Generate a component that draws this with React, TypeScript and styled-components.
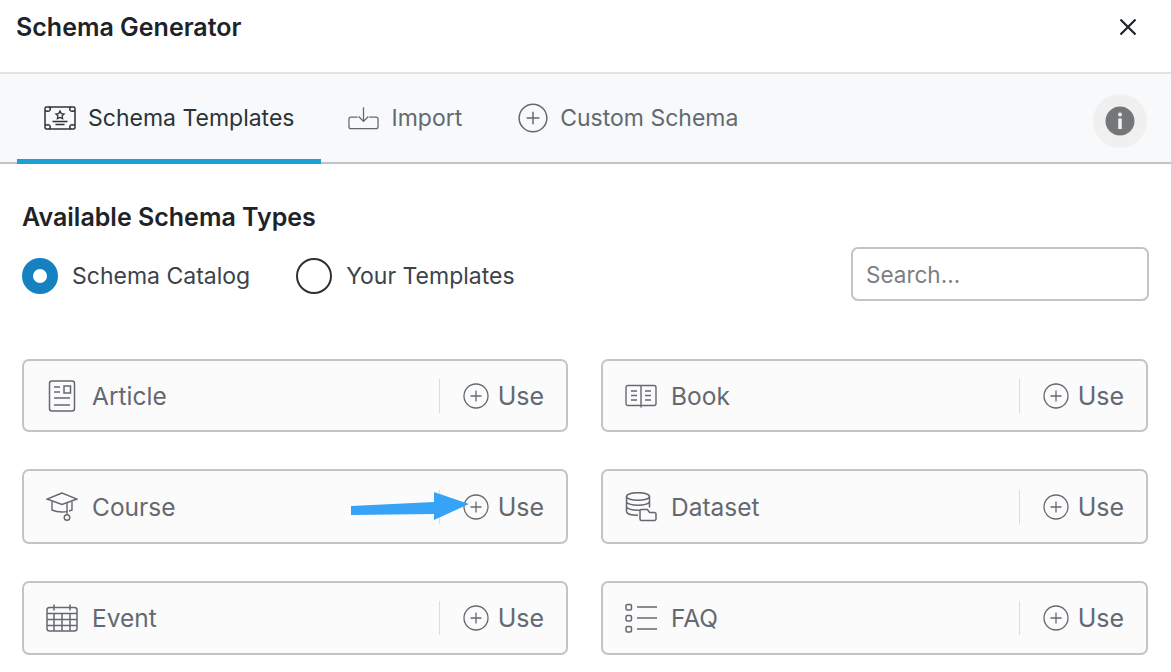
import React from "react";
import styled, { createGlobalStyle } from "styled-components";

const GlobalStyle = createGlobalStyle`
  html, body {
    margin: 0;
    padding: 0;
    background: #fff;
  }
  body {
    font-family: Inter, "Liberation Sans", sans-serif;
    color: #1d2327;
  }
`;

const CertificateIcon = () => (
  <svg width="32" height="24" viewBox="0 0 32 24" fill="none" stroke="#2c3338" strokeWidth="1.5">
    <rect x="1" y="1" width="30" height="22" rx="1.5" />
    <path d="M1 5h2a2 2 0 0 0 2-4M31 5h-2a2 2 0 0 1-2-4M1 19h2a2 2 0 0 1 2 4M31 19h-2a2 2 0 0 0-2 4" />
    <path d="M16 5l1.3 2.6 2.8.3-2 2 .5 2.8-2.6-1.3-2.6 1.3.5-2.8-2-2 2.8-.3z" strokeWidth="1.3" />
    <path d="M8.5 15.5h15M11.5 18.5h9" strokeWidth="1.3" />
  </svg>
);

const ImportIcon = () => (
  <svg width="31" height="24" viewBox="0 0 32 24" fill="none" stroke="#646970" strokeWidth="1.3">
    <path d="M16 1v14M11 10.5l5 5 5-5" />
    <path d="M10 11H3a2 2 0 0 0-2 2v8a2 2 0 0 0 2 2h26a2 2 0 0 0 2-2v-8a2 2 0 0 0-2-2h-7" />
  </svg>
);

const PlusCircle = ({ size }: { size: number }) => (
  <svg width={size} height={size} viewBox="0 0 26 26" fill="none" stroke="#646970" strokeWidth="1.3">
    <circle cx="13" cy="13" r="12" />
    <path d="M13 7.5v11M7.5 13h11" />
  </svg>
);

const ArticleIcon = () => (
  <svg width="30" height="32" viewBox="0 0 30 32" fill="none" stroke="#646970" strokeWidth="1.5">
    <rect x="2.5" y="1" width="25" height="30" rx="2.5" />
    <path d="M7 7h6M7 12h6M7 18h16M7 25h16" />
    <rect x="17" y="6" width="6.5" height="7" />
  </svg>
);

const BookIcon = () => (
  <svg width="32" height="24" viewBox="0 0 32 24" fill="none" stroke="#646970" strokeWidth="1.4">
    <rect x="1" y="1.5" width="30" height="20" rx="2" />
    <path d="M16 1.5V23.5M6 7h6M6 11.5h6M6 16h6M20 7h6M20 11.5h6M20 16h6" />
  </svg>
);

const CapIcon = () => (
  <svg width="32" height="30" viewBox="0 0 32 30" fill="none" stroke="#646970" strokeWidth="1.4">
    <path d="M16 1L1 7l15 5.5L31 7z" />
    <path d="M6 9.5V18c3 1.5 6.5 2 10 2 1.5 0 3.5 0 5.5-.6M26 9.5V18c-1 .5-2 .8-3 1" />
    <path d="M21 10.5v12" />
    <circle cx="21" cy="25.5" r="2.8" />
  </svg>
);

const DatasetIcon = () => (
  <svg width="32" height="30" viewBox="0 0 32 30" fill="none" stroke="#646970" strokeWidth="1.5">
    <ellipse cx="13" cy="4.5" rx="11.5" ry="3.8" />
    <path d="M1.5 4.5v15c0 2 4 3.8 11.5 3.8M24.5 4.5v11M1.5 9.5c0 2 5 3.8 11.5 3.8s11.5-1.8 11.5-3.8M1.5 14.5c0 2 5 3.8 11.5 3.8 1.2 0 2-.1 3-.2" />
    <path d="M15 27v-8a1.5 1.5 0 0 1 1.5-1.5h6l2 3h5a1.5 1.5 0 0 1 1.5 1.5v5a1.5 1.5 0 0 1-1.5 1.5h-13A1.5 1.5 0 0 1 15 27z" fill="#fbfbfc" />
  </svg>
);

const CalendarIcon = () => (
  <svg width="32" height="28" viewBox="0 0 32 28" fill="none" stroke="#646970" strokeWidth="1.5">
    <rect x="1" y="3.5" width="30" height="23.5" rx="2.5" />
    <path d="M8 0.5v6M24 0.5v6M1 9.5h30M1 15.5h30M1 21.5h30M8 9.5V27M16 9.5V27M24 9.5V27" />
  </svg>
);

const FaqIcon = () => (
  <svg width="32" height="30" viewBox="0 0 32 30" fill="none" stroke="#646970" strokeWidth="1.5">
    <rect x="1" y="1.5" width="5.5" height="5.5" rx="1.5" />
    <rect x="1" y="12.5" width="5.5" height="5.5" rx="1.5" />
    <rect x="1" y="23.5" width="5.5" height="5.5" rx="1.5" />
    <path d="M12 4h20M12 15h20M12 26h20" />
  </svg>
);

const schemas = [
  { name: "Article", icon: <ArticleIcon /> },
  { name: "Book", icon: <BookIcon /> },
  { name: "Course", icon: <CapIcon />, marked: true },
  { name: "Dataset", icon: <DatasetIcon /> },
  { name: "Event", icon: <CalendarIcon /> },
  { name: "FAQ", icon: <FaqIcon /> },
];

const App = () => (
  <Page>
    <GlobalStyle />
    <Header>
      <Title>Schema Generator</Title>
      <CloseButton aria-label="Close">
        <svg width="18" height="18" viewBox="0 0 18 18" stroke="#1d2327" strokeWidth="2.2" fill="none">
          <path d="M1.5 1.5l15 15M16.5 1.5l-15 15" />
        </svg>
      </CloseButton>
    </Header>
    <TabBar>
      <Tab $active>
        <CertificateIcon />
        Schema Templates
      </Tab>
      <Tab>
        <ImportIcon />
        Import
      </Tab>
      <Tab>
        <PlusCircle size={30} />
        Custom Schema
      </Tab>
      <InfoButton aria-label="Info">
        <svg width="30" height="30" viewBox="0 0 30 30">
          <circle cx="15" cy="15" r="14.5" fill="#757679" />
          <rect x="13.2" y="12.5" width="3.6" height="10.5" fill="#f0f0f1" />
          <circle cx="15" cy="8.5" r="2" fill="#f0f0f1" />
        </svg>
      </InfoButton>
    </TabBar>
    <Body>
      <Heading>Available Schema Types</Heading>
      <FilterRow>
        <RadioLabel>
          <Radio $checked />
          Schema Catalog
        </RadioLabel>
        <RadioLabel>
          <Radio />
          Your Templates
        </RadioLabel>
        <SearchInput placeholder="Search..." />
      </FilterRow>
      <CardGrid>
        {schemas.map(schema => (
          <Card key={schema.name}>
            <CardIcon>{schema.icon}</CardIcon>
            <CardName>{schema.name}</CardName>
            <UseButton>
              <PlusCircle size={26} />
              Use
            </UseButton>
            {schema.marked && (
              <Arrow width="120" height="34" viewBox="0 0 120 34">
                <path d="M0 17L83 13V3L118 15L83 31V25L0 26z" fill="#36a3f7" />
              </Arrow>
            )}
          </Card>
        ))}
      </CardGrid>
    </Body>
  </Page>
);

const Page = styled.div`
  width: 1171px;
  height: 672px;
  overflow: hidden;
  background: #fff;
`;

const Header = styled.header`
  height: 74px;
  box-sizing: border-box;
  display: flex;
  align-items: center;
  justify-content: space-between;
  padding: 0 34px 18px 16px;
  border-bottom: 2px solid #dfe3e5;
`;

const Title = styled.h1`
  margin: 0;
  font-size: 25px;
  font-weight: 600;
  color: #1d2327;
`;

const CloseButton = styled.button`
  display: flex;
  padding: 0;
  border: 0;
  background: none;
`;

const TabBar = styled.nav`
  height: 90px;
  box-sizing: border-box;
  display: flex;
  align-items: stretch;
  padding: 0 24px 0 17px;
  background: #f7f9fb;
  border-bottom: 2px solid #c3c4c7;
`;

const Tab = styled.div<{ $active?: boolean }>`
  display: flex;
  align-items: center;
  gap: 12px;
  padding: 2px 27px 0;
  margin-bottom: -2px;
  font-size: 23px;
  color: ${p => (p.$active ? "#2c3338" : "#646970")};
  border-bottom: 5px solid ${p => (p.$active ? "#1f9fd4" : "transparent")};
  box-sizing: border-box;
  &:nth-child(3) {
    margin-left: 2px;
  }
`;

const InfoButton = styled.button`
  width: 54px;
  height: 54px;
  margin: 20px 0 0 auto;
  padding: 0;
  border: 0;
  border-radius: 50%;
  background: #f0f0f1;
  display: flex;
  align-items: center;
  justify-content: center;
`;

const Body = styled.main`
  padding: 38px 22px 0;
`;

const Heading = styled.h2`
  margin: 0;
  font-size: 25px;
  line-height: 30px;
  font-weight: 600;
  color: #1d2327;
`;

const FilterRow = styled.div`
  display: flex;
  align-items: center;
  gap: 46px;
  margin-top: 15px;
`;

const RadioLabel = styled.label`
  display: flex;
  align-items: center;
  gap: 14px;
  font-size: 23px;
  line-height: 36px;
  padding-top: 4px;
  color: #3c434a;
`;

const Radio = styled.span<{ $checked?: boolean }>`
  width: 36px;
  height: 36px;
  box-sizing: border-box;
  border-radius: 50%;
  background: #fff;
  border: ${p => (p.$checked ? "11px solid #1581c0" : "2px solid #2c3338")};
`;

const SearchInput = styled.input`
  width: 298px;
  height: 54px;
  box-sizing: border-box;
  margin-left: auto;
  padding: 0 13px;
  border: 2px solid #c3c4c7;
  border-radius: 7px;
  background: #fff;
  font: 400 22.5px Inter, "Liberation Sans", sans-serif;
  color: #3c434a;
  &::placeholder {
    color: #7b7e82;
    opacity: 1;
  }
`;

const CardGrid = styled.div`
  display: grid;
  grid-template-columns: 546px 547px;
  grid-template-rows: 73px 75px 74px;
  column-gap: 33px;
  row-gap: 37px;
  margin-top: 58px;
`;

const Card = styled.div`
  position: relative;
  box-sizing: border-box;
  display: flex;
  align-items: center;
  padding: 0 22px;
  background: #fbfbfc;
  border: 2px solid #c3c4c7;
  border-radius: 7px;
`;

const CardIcon = styled.span`
  width: 32px;
  display: flex;
  justify-content: center;
  margin-right: 14px;
`;

const CardName = styled.span`
  flex: 1;
  font-size: 24.5px;
  color: #646970;
`;

const UseButton = styled.span`
  display: flex;
  align-items: center;
  gap: 9px;
  height: 34px;
  padding-left: 23px;
  border-left: 1px solid #dcdcde;
  font-size: 25px;
  color: #646970;
`;

const Arrow = styled.svg`
  position: absolute;
  left: 327px;
  top: 18px;
`;

export default App;
